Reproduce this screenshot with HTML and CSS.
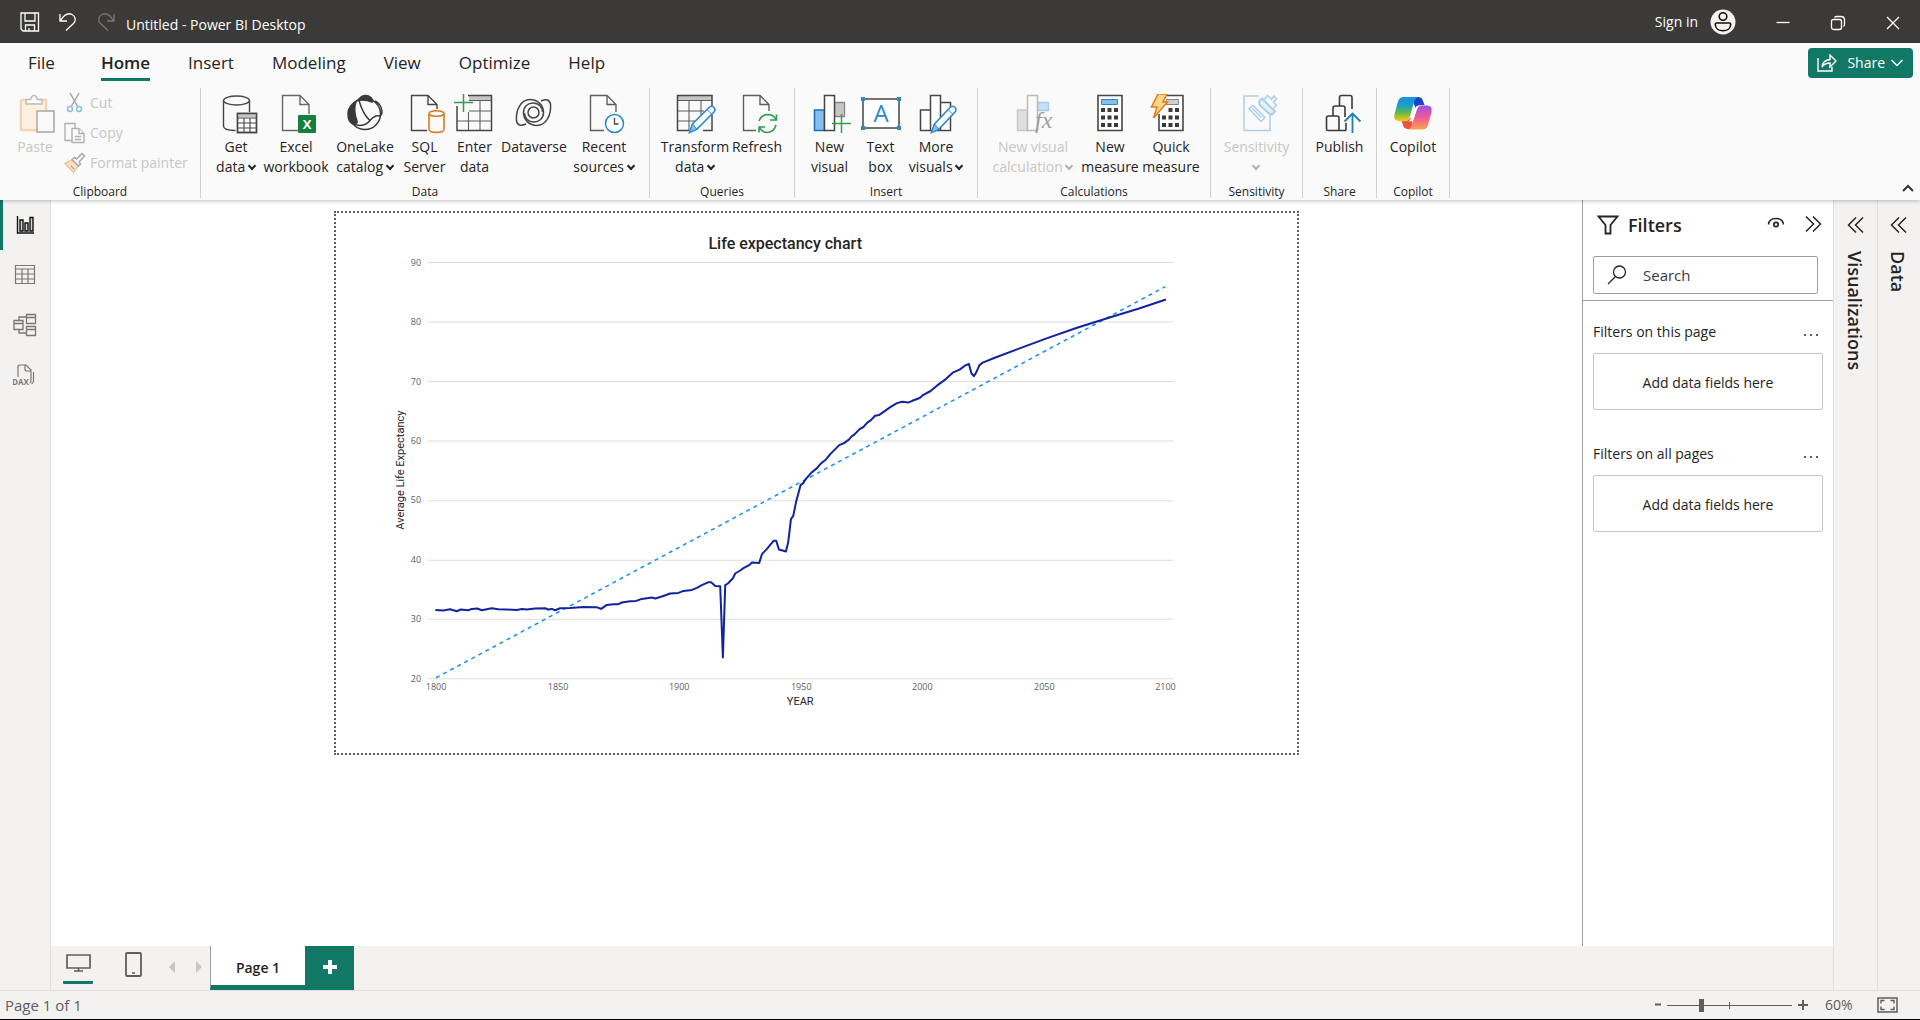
FILE: index.html
```html
<!DOCTYPE html>
<html lang="en">
<head>
<meta charset="utf-8">
<title>Untitled - Power BI Desktop</title>
<link rel="stylesheet" href="styles.css">
</head>
<body>
<header class="titlebar">
  <button class="title-btn" aria-label="Save"><svg width="20" height="20" viewBox="0 0 20 20"><path d="M1 1h17.500v18H3l-2-2zM5 1v8h10V1M5.500 19v-6h9v6M9 19v-3" fill="none" stroke="#fff" stroke-width="1.300"/></svg></button>
  <button class="title-btn" aria-label="Undo"><svg width="20" height="20" viewBox="0 0 20 20"><path d="M2 2v7h7M2.500 8.500C6 3 10 .5 14 2.500c4 2 4 6.500 1.500 9L8 18.500" fill="none" stroke="#fff" stroke-width="1.300"/></svg></button>
  <button class="title-btn" aria-label="Redo" disabled><svg width="20" height="20" viewBox="0 0 20 20"><path d="M18 2v7h-7M17.500 8.500C14 3 10 .5 6 2.500c-4 2-4 6.500-1.500 9L12 18.500" fill="none" stroke="#797775" stroke-width="1.300"/></svg></button>
  <h1 class="title">Untitled - Power BI Desktop</h1>
  <button class="sign-in">Sign in
    <svg width="26" height="26" viewBox="0 0 26 26"><circle cx="13" cy="13" r="12.500" fill="#f3f2f1"/><circle cx="13" cy="7.500" r="3.800" fill="none" stroke="#111" stroke-width="1.600"/><path d="M6.500 14h13q1.200 0 1.200 1.500c0 4-3.500 6.300-7.700 6.300s-7.700-2.300-7.700-6.300Q5.300 14 6.500 14z" fill="none" stroke="#111" stroke-width="1.600"/></svg>
  </button>
  <button class="window-btn" aria-label="Minimize"><svg width="16" height="16" viewBox="0 0 16 16"><path d="M1.500 7.500h13" stroke="#fff" stroke-width="1.300"/></svg></button>
  <button class="window-btn" aria-label="Restore"><svg width="16" height="16" viewBox="0 0 16 16"><g fill="none" stroke="#fff" stroke-width="1.300"><rect x="1.500" y="4.500" width="10" height="10" rx="2"/><path d="M4.500 2.500Q5 1.500 7 1.500h4q3.500 0 3.500 3.500v4q0 2-1 2.500"/></g></svg></button>
  <button class="window-btn" aria-label="Close"><svg width="16" height="16" viewBox="0 0 16 16"><path d="M2 2l12 12M14 2L2 14" stroke="#fff" stroke-width="1.300"/></svg></button>
</header>

<section class="ribbon">
  <nav class="tabs">
    <button class="tab">File</button>
    <button class="tab tab-active">Home</button>
    <button class="tab">Insert</button>
    <button class="tab">Modeling</button>
    <button class="tab">View</button>
    <button class="tab">Optimize</button>
    <button class="tab">Help</button>
    <button class="share"><svg width="20" height="18" viewBox="0 0 20 18"><path d="M1 4v13h14v-4M5 13c.5-5 3.500-7 8-7.500V1l6 6-6 6V9c-4 0-6 1-8 4z" fill="none" stroke="#fff" stroke-width="1.400"/></svg><span>Share</span><svg width="12" height="8" viewBox="0 0 12 8"><path d="M.5 1L6 6.500 11.500 1" fill="none" stroke="#fff" stroke-width="1.400"/></svg></button>
  </nav>
  <div class="groups">
    <section class="group group-clipboard">
      <div class="tools">
        <button class="tool" disabled><svg width="44" height="40" viewBox="0 0 44 40"><path d="M8 6h25v11M8 6v30h17" fill="none" stroke="#f5d3ae" stroke-width="2.500"/><path d="M10 8h21v8h-8v18H10z" fill="#fdf0dc"/><path d="M13 10V5.500h4.500q1-4 3.500-4t3.500 4H29V10z" fill="#fafafa" stroke="#bdbbb9" stroke-width="1.400"/><path d="M24 17h17v21H24z" fill="#fafafa" stroke="#a8a6a4" stroke-width="1.500"/></svg><span>Paste</span></button>
        <div class="small-tools">
          <button class="small-tool" disabled><svg width="22" height="22" viewBox="0 0 22 22"><path d="M6 1l8 14M15 1L7 15" stroke="#a8a6a4" stroke-width="1.500"/><g fill="none" stroke="#8fbdda" stroke-width="1.500"><circle cx="6" cy="17" r="2.500"/><circle cx="15" cy="17" r="2.500"/></g></svg>Cut</button>
          <button class="small-tool" disabled><svg width="22" height="22" viewBox="0 0 22 22"><g fill="#fafafa" stroke="#b3b1af" stroke-width="1.400"><path d="M1 1.500h10v17H1z"/><path d="M8 6.500h7l5 5v9H8z"/><path d="M15 6.500v5h5M11 14.500h6M11 17.500h6"/></g></svg>Copy</button>
          <button class="small-tool" disabled><svg width="22" height="22" viewBox="0 0 22 22"><path d="M1 11.500L8 8l6 6-4.500 6.500z" fill="#fbe3c8" stroke="#f0c294" stroke-width="1.400"/><path d="M8 7.500l6.500 6.500 2-2-1.500-2L20.500 4 18 1.500 12.500 7 10.500 5.500zM7 14l3 3" fill="#fafafa" stroke="#a8a6a4" stroke-width="1.400"/></svg>Format painter</button>
        </div>
      </div>
      <h2 class="group-name">Clipboard</h2>
    </section>

    <section class="group group-data">
      <div class="tools">
        <button class="tool"><svg width="44" height="40" viewBox="0 0 44 40"><g fill="none" stroke="#484644" stroke-width="1.400"><path d="M35.500 18V6.500M9.500 6.500V32c0 3 5.500 4.500 12 4.500"/><ellipse cx="22.500" cy="6.500" rx="13" ry="4.500" fill="#fafafa"/><path d="M23.500 19.500h19v19h-19z" fill="#fff"/><path d="M24 21.500h18" stroke="#c8c6c4" stroke-width="3"/><path d="M23.500 24h19M23.500 29h19M23.500 34h19M30 24v14M36 24v14" stroke-width="1.100"/><path d="M23.500 19.500h19v19h-19z"/></g></svg><span>Get<br>data <i class="caret"></i></span></button>
        <button class="tool"><svg width="44" height="40" viewBox="0 0 44 40"><path d="M24 36.500H8.500v-35H26l9 9V20M26 1.500v9h9" fill="none" stroke="#696765" stroke-width="1.400"/><rect x="24" y="21" width="18" height="18" rx="1" fill="#15803d"/><text x="33" y="35" class="excel-x">X</text></svg><span>Excel<br>workbook</span></button>
        <button class="tool"><svg width="44" height="40" viewBox="0 0 44 40"><g fill="none" stroke="#3b3a39" stroke-width="1.500"><circle cx="22" cy="20" r="15.500" fill="#fafafa"/><path d="M14.500 6.500Q18 2 22 1.500q6 0 8 5.500l-1 1Q22 5 14.500 6.500z" fill="#3b3a39"/><path d="M13 7.500Q5 12 5 20t5 10q5 0 4-3-4-11-1-19.500z" fill="#3b3a39"/><path d="M16 6.500q4 14 11 20M10 30q11 4 17-3.500 5-6 10-4.500 2-1 2-5-1-7-7-10"/></g></svg><span>OneLake<br>catalog <i class="caret"></i></span></button>
        <button class="tool"><svg width="44" height="40" viewBox="0 0 44 40"><path d="M24 36.500H8.500v-35H25l9 9V15M25 1.500v9h9" fill="none" stroke="#484644" stroke-width="1.400"/><path d="M26 20v15c0 4.500 15 4.500 15 0V20" fill="#fafafa" stroke="#dd7a1d" stroke-width="1.600"/><ellipse cx="33.500" cy="19.500" rx="7.500" ry="2.800" fill="#fafafa" stroke="#dd7a1d" stroke-width="1.600"/></svg><span>SQL<br>Server</span></button>
        <button class="tool"><svg width="44" height="40" viewBox="0 0 44 40"><path d="M16 1.500h22.500v5H16z" fill="#c8c6c4"/><g fill="none" stroke="#605e5c" stroke-width="1.100"><path d="M16 6.500h23M16 17h23M4 27h35M15.500 18v18.500M27 7v29.500"/></g><path d="M15 1.500h23.500v35H4V12" fill="none" stroke="#484644" stroke-width="1.500"/><path d="M1 8.500h19M10.500 0v18" stroke="#2e9e4f" stroke-width="1.500"/></svg><span>Enter<br>data</span></button>
        <button class="tool"><svg width="44" height="40" viewBox="0 0 44 40"><g fill="none" stroke="#484644" stroke-width="1.500"><path d="M14 30Q6 33.500 4.500 27C3.500 16 9 5.500 18 5.500c8 0 13.500 6 13.500 13 0 6-4.500 9.500-9.500 9.500-6 0-9.500-4.500-9.500-9"/><path d="M29 7Q37 3.500 38.500 10C39.500 21 34 31.500 25 31.500c-8 0-13.500-6-13.500-13 0-6 4.500-9.500 9.500-9.500 6 0 9.500 4.500 9.500 9"/><circle cx="21.500" cy="18.500" r="5.500"/></g></svg><span>Dataverse</span></button>
        <button class="tool"><svg width="44" height="40" viewBox="0 0 44 40"><path d="M22 36.500H8.500v-35H25l9 9V18M25 1.500v9h9" fill="none" stroke="#605e5c" stroke-width="1.400"/><circle cx="32.500" cy="29.500" r="9" fill="#fff" stroke="#2b88c9" stroke-width="1.500"/><path d="M32.500 24v6h4" fill="none" stroke="#484644" stroke-width="1.300"/></svg><span>Recent<br>sources <i class="caret"></i></span></button>
      </div>
      <h2 class="group-name">Data</h2>
    </section>

    <section class="group group-queries">
      <div class="tools">
        <button class="tool"><svg width="44" height="40" viewBox="0 0 44 40"><path d="M5 1.500h34v5H5z" fill="#c8c6c4"/><g fill="none" stroke="#605e5c" stroke-width="1.100"><path d="M5 6.500h34M5 17h26M5 27h17M16 7v29M28 7v14"/></g><path d="M39 12V1.500H4.500v35H16M30 36.500h9V21" fill="none" stroke="#484644" stroke-width="1.500"/><path d="M16.500 38.500l3-8.500L36 13.500q3-2.500 5 0 2 2 0 4.500L24 35z" fill="#fff" stroke="#2b88c9" stroke-width="1.600"/><path d="M16.500 38.500l3-8.500 4.500 5z" fill="#83beec" stroke="#2b88c9"/><path d="M34 15.500l5 5" stroke="#2b88c9"/></svg><span>Transform<br>data <i class="caret"></i></span></button>
        <button class="tool"><svg width="44" height="40" viewBox="0 0 44 40"><path d="M21 36.500H8.500v-35H25l9 9V17M25 1.500v9h9" fill="none" stroke="#605e5c" stroke-width="1.400"/><g fill="none" stroke="#2e9e4f" stroke-width="1.600"><path d="M24 27q2-6 8.500-6.500 6 0 8.500 5M41.500 20.500V26H35M41 31q-2 7-8.500 7.500-6 0-8.500-6M24 38.500V33h6"/></g></svg><span>Refresh</span></button>
      </div>
      <h2 class="group-name">Queries</h2>
    </section>

    <section class="group group-insert">
      <div class="tools">
        <button class="tool"><svg width="44" height="40" viewBox="0 0 44 40"><path d="M6.500 16h10v20.500h-10z" fill="#83beec" stroke="#1b6fb3" stroke-width="1.500"/><path d="M26.500 8.500h10v14h-10z" fill="#c8c6c4" stroke="#8a8886" stroke-width="1.300"/><path d="M16.500 1.500h10v35h-10z" fill="#fff" stroke="#484644" stroke-width="1.500"/><path d="M24 29.500h19M33.500 20v19" stroke="#2e9e4f" stroke-width="1.500"/></svg><span>New<br>visual</span></button>
        <button class="tool"><svg width="44" height="40" viewBox="0 0 44 40"><path d="M4 5h36v29H4z" fill="#fff" stroke="#484644" stroke-width="1.500"/><path d="M2 3h4v4H2zM38 3h4v4h-4zM2 32h4v4H2zM38 32h4v4h-4z" fill="#2b88c9"/><text x="22" y="28" class="glyph-a">A</text></svg><span>Text<br>box</span></button>
        <button class="tool"><svg width="44" height="40" viewBox="0 0 44 40"><g fill="#fff" stroke="#484644" stroke-width="1.500"><path d="M6.500 16h10v20.500h-10zM26.500 8.500h10v28h-10zM16.500 1.500h10v35h-10z"/></g><path d="M17.500 38.500l3-8.500L36 13.500q3-2.500 5 0 2 2 0 4.500L25 35z" fill="#fff" stroke="#2b88c9" stroke-width="1.600"/><path d="M17.500 38.500l3-8.500 4.500 5z" fill="#83beec" stroke="#2b88c9"/><path d="M34 15.500l5 5" stroke="#2b88c9"/></svg><span>More<br>visuals <i class="caret"></i></span></button>
      </div>
      <h2 class="group-name">Insert</h2>
    </section>

    <section class="group group-calculations">
      <div class="tools">
        <button class="tool" disabled><svg width="44" height="40" viewBox="0 0 44 40"><path d="M6.500 16h10v20.500h-10z" fill="#e1dfdd" stroke="#c8c6c4" stroke-width="1.500"/><path d="M26.500 8.500h11v8h-11z" fill="#c7e0f4" stroke="#a5cdea" stroke-width="1.300"/><path d="M16.500 1.500h10v35h-10z" fill="#fafafa" stroke="#bdbbb9" stroke-width="1.500"/><text x="24" y="34" class="glyph-fx">fx</text></svg><span>New visual<br>calculation <i class="caret"></i></span></button>
        <button class="tool"><svg width="44" height="40" viewBox="0 0 44 40"><path d="M10 1.500h24v35H10z" fill="#fff" stroke="#484644" stroke-width="1.600"/><path d="M13.500 5.500h16v5h-16z" fill="#83beec" stroke="#2b88c9"/><path d="M13 14h4v4h-4zM19.500 14h4v4h-4zM26 14h4v4h-4zM13 21.500h4v4h-4zM19.500 21.500h4v4h-4zM26 21.500h4v4h-4zM13 29h4v4h-4zM19.500 29h4v4h-4zM26 29h4v4h-4z" fill="#3b3a39"/></svg><span>New<br>measure</span></button>
        <button class="tool"><svg width="44" height="40" viewBox="0 0 44 40"><path d="M18 1.500h16v35H10V20" fill="#fff" stroke="#484644" stroke-width="1.600"/><path d="M17.500 5.500h12v5h-13z" fill="#d2d0ce" stroke="#8a8886"/><path d="M19.500 14h4v4h-4zM26 14h4v4h-4zM13 21.500h4v4h-4zM19.500 21.500h4v4h-4zM26 21.500h4v4h-4zM13 29h4v4h-4zM19.500 29h4v4h-4zM26 29h4v4h-4z" fill="#3b3a39"/><path d="M9 0h9l-4 8h4.500L4.500 24 8 13H2.500z" fill="#fbd68b" stroke="#e07d12" stroke-width="1.500"/></svg><span>Quick<br>measure</span></button>
      </div>
      <h2 class="group-name">Calculations</h2>
    </section>

    <section class="group group-sensitivity">
      <div class="tools">
        <button class="tool" disabled><svg width="44" height="40" viewBox="0 0 44 40"><g fill="none" stroke="#abd0e8" stroke-width="1.500"><path d="M24 2H9v34.500h26V20"/><path d="M14 14.500l4-3 12 12-4 4z"/><path d="M17.500 14.500l9 9"/><path d="M24 7.500l3-3 13 13-3 3-3-1-9-8z" fill="#e4f1fa" stroke-width="2"/><path d="M29.500 5.500l3-4 4 4 2.500-3.500 2.500 3-3 3 3 3-3.500 4"/></g></svg><span>Sensitivity<br><i class="caret"></i></span></button>
      </div>
      <h2 class="group-name">Sensitivity</h2>
    </section>

    <section class="group group-share">
      <div class="tools">
        <button class="tool"><svg width="44" height="40" viewBox="0 0 44 40"><g fill="none" stroke="#3b3a39" stroke-width="1.600"><path d="M28 36.500H10q-1.500 0-1.500-1.500V24q0-2 2-2H19q2 0 2 2v12M15 22V14q0-2 2-2h8q2 0 2 2v9M21.500 12V3.500q0-2 2-2H32q2 0 2 2V15M28 29v7.500"/></g><path d="M34.500 39V20M26.500 27.500l8-8 8 8" fill="none" stroke="#1f7fb8" stroke-width="1.800"/></svg><span>Publish</span></button>
      </div>
      <h2 class="group-name">Share</h2>
    </section>

    <section class="group group-copilot">
      <div class="tools">
        <button class="tool"><svg width="44" height="40" viewBox="0 0 44 40">
          <defs>
            <linearGradient id="cp-left" x1="0" y1="0" x2="0" y2="1"><stop offset="0" stop-color="#1b8fe6"/><stop offset=".35" stop-color="#18a0c9"/><stop offset=".65" stop-color="#62b84a"/><stop offset="1" stop-color="#f6c90e"/></linearGradient>
            <linearGradient id="cp-right" x1="0" y1="0" x2="0" y2="1"><stop offset="0" stop-color="#a14fe8"/><stop offset=".5" stop-color="#ef5a92"/><stop offset="1" stop-color="#fda34f"/></linearGradient>
          </defs>
          <path d="M20 3h7q4 0 5 4l1.500 4H30q-4 0-5 4z" fill="#1b43c8"/>
          <path d="M24 35h-7q-4 0-5-4L10.500 27H14q4 0 5-4z" fill="#ee5340"/>
          <path d="M12 3h15q-3 1-4 5l-4 14q-1.500 5-6 5H8q-6 0-4.500-7L7 7.500Q8.500 3 12 3z" fill="url(#cp-left)"/>
          <path d="M32 35.500H17q3-1 4-5l4-14q1.500-5 6-5h5q6 0 4.500 7L37 31q-1.500 4.500-5 4.500z" fill="url(#cp-right)"/>
          <path d="M25 12.500q2-1 4-1-2 1-3 4l-3 9q-1 3-5.500 3 2.500-2 3.500-5z" fill="#fff"/>
        </svg><span>Copilot</span></button>
      </div>
      <h2 class="group-name">Copilot</h2>
    </section>
    <button class="collapse" aria-label="Collapse the ribbon"><svg width="12" height="8" viewBox="0 0 12 8"><path d="M1 7l5-5 5 5" fill="none" stroke="#323130" stroke-width="2"/></svg></button>
  </div>
</section>

<main class="workspace">
  <nav class="rail">
    <button class="rail-btn rail-active" aria-label="Report view"><svg width="24" height="24" viewBox="0 0 24 24"><g fill="#d2d0ce" stroke="#111" stroke-width="1.400"><path d="M3.500 3v17H20" fill="none"/><path d="M6 7h3v11H6zM11 10h3v8h-3zM16 4.500h3V18h-3z"/></g></svg></button>
    <button class="rail-btn" aria-label="Table view"><svg width="24" height="24" viewBox="0 0 24 24"><path d="M2.500 2.500h19v18h-19zM2.500 6h19M2.500 11h19M2.500 16h19M9 6v15M15 6v15" fill="none" stroke="#797775" stroke-width="1.200"/></svg></button>
    <button class="rail-btn" aria-label="Model view"><svg width="24" height="24" viewBox="0 0 24 24"><g fill="none" stroke="#797775" stroke-width="1.300"><path d="M13.500 1.500h9v9h-9zM13.500 4.500h9M13.500 13.500h9v9h-9zM13.500 16.500h9M1 7.500h9v9H1zM1 10.500h9M6 7.500V4h7M6 16.500V20h7"/></g></svg></button>
    <button class="rail-btn" aria-label="DAX query view"><svg width="24" height="24" viewBox="0 0 24 24"><path d="M5 14V4q0-2 2-2h6l5 5v9q0 3-1 4M12 2v4q0 2 2 2h4M20.500 9v9q0 2-2 3" fill="none" stroke="#797775" stroke-width="1.200"/><text x="-1" y="22" class="dax">DAX</text></svg></button>
  </nav>

  <section class="center">
    <div class="editor">
      <div class="canvas">
        <div class="report-page">
          <svg class="chart" viewBox="0 0 960 540" role="img" aria-label="Life expectancy chart">
            <path class="grid" d="M92 49.500H837M92 109H837M92 168.500H837M92 228H837M92 287.500H837M92 347H837M92 406H837M92 465.500H837"/>
            <text class="chart-title" x="449" y="36">Life expectancy chart</text>
            <g class="tick tick-y">
              <text x="85" y="53">90</text><text x="85" y="112">80</text><text x="85" y="172">70</text><text x="85" y="231">60</text>
              <text x="85" y="290">50</text><text x="85" y="350">40</text><text x="85" y="409">30</text><text x="85" y="469">20</text>
            </g>
            <g class="tick tick-x">
              <text x="100" y="477">1800</text><text x="222" y="477">1850</text><text x="343" y="477">1900</text><text x="465" y="477">1950</text>
              <text x="586" y="477">2000</text><text x="708" y="477">2050</text><text x="829" y="477">2100</text>
            </g>
            <text class="axis-name" x="464" y="492">YEAR</text>
            <text class="axis-name" transform="translate(68 257) rotate(-90)">Average Life Expectancy</text>
            <path class="trend" d="M100 464.500L829 73.500"/>
            <polyline class="series" points="99.300,396.700 107.300,397.300 114,396 120.700,398 124.700,396.300 132.300,397 135.700,395.700 141.300,395.300 145.700,397 155.700,395 162.300,396 170.700,396.300 180.700,396.700 185.700,395.700 190.700,396.300 199,395.300 209,395 211.700,396.300 215.700,395.700 219,397 224,395 234,394.700 247.300,393.700 260.700,394 265,395.700 270.700,391.700 277.300,391 282.300,391 285.700,389.300 294,388 300,387.700 305.700,385.700 315.700,384.300 319,385.300 325.700,383.300 334,380.300 342.300,379.700 347.300,377.700 355.700,376.700 360.700,374.700 365.700,372 372.300,369 375,369 379,372.700 384,373 386.700,444.300 389,372 391.700,370.300 396.700,365 399,360.300 404,357.300 407.300,355 413.300,351.700 415.700,349.300 423,349.700 425.700,341 430.700,335.700 437.300,327.700 440,327.700 442.700,336.300 449.700,338.300 452,328.700 454.700,306 457,302.700 460,288 464.300,272 467,270 469.700,265.700 475,259.700 480.700,255 484.700,250.300 489.700,246.300 494,241 503,232 507.300,230.300 512.300,226.700 515.700,223 518.300,221.300 523,216.300 527.300,213.700 530.700,209.700 534.700,207 538.700,202.700 542.700,202 554,194 560.700,190 565.700,188.700 572.300,189.300 576,187.700 583.300,184.900 587.100,181.700 594.300,177.900 600.900,172.300 609.500,166 616.400,159.600 623.300,156.500 628.500,152.600 632.600,150.900 635,160 637.500,163.100 639.900,159.300 643,152.300 646.400,149.500 657.800,144.900 681.900,135.800 709.500,125.600 740.600,114.700 771.600,104.900 802.600,95.400 829.500,86.500"/>
          </svg>
        </div>
      </div>

      <aside class="filters">
        <div class="filters-head">
          <svg width="22" height="20" viewBox="0 0 22 20"><path d="M1.500 1.500h19L13.500 10v8.500h-5V10z" fill="none" stroke="#252423" stroke-width="1.800"/></svg>
          <h2>Filters</h2>
          <button class="icon-btn" aria-label="Hide filter pane in reading view"><svg width="18" height="16" viewBox="0 0 18 16"><path d="M1.500 7.500q.5-6 7.500-6t7.500 6" fill="none" stroke="#252423" stroke-width="1.500"/><circle cx="9" cy="7.500" r="2.200" fill="none" stroke="#252423" stroke-width="1.700"/></svg></button>
          <button class="icon-btn" aria-label="Collapse filters"><svg width="18" height="20" viewBox="0 0 18 20"><path d="M2 1.500L9.500 9 2 16.500M9 1.500L16.500 9 9 16.500" fill="none" stroke="#252423" stroke-width="1.500"/></svg></button>
        </div>
        <div class="search">
          <svg width="20" height="20" viewBox="0 0 20 20"><circle cx="12.500" cy="7" r="6" fill="none" stroke="#252423" stroke-width="1.300"/><path d="M8.500 11.500L1 19" stroke="#252423" stroke-width="1.300"/></svg>
          <input type="search" placeholder="Search" aria-label="Search">
        </div>
        <section class="well">
          <div class="well-head"><h3>Filters on this page</h3><button class="icon-btn" aria-label="More options"><svg width="14" height="4" viewBox="0 0 14 4"><path d="M0 1h2v2H0zM6 1h2v2H6zM12 1h2v2h-2z" fill="#605e5c"/></svg></button></div>
          <div class="drop">Add data fields here</div>
        </section>
        <section class="well">
          <div class="well-head"><h3>Filters on all pages</h3><button class="icon-btn" aria-label="More options"><svg width="14" height="4" viewBox="0 0 14 4"><path d="M0 1h2v2H0zM6 1h2v2H6zM12 1h2v2h-2z" fill="#605e5c"/></svg></button></div>
          <div class="drop">Add data fields here</div>
        </section>
      </aside>
    </div>

    <div class="page-bar">
      <button class="layout-btn layout-active" aria-label="Desktop layout"><svg width="26" height="26" viewBox="0 0 26 26"><path d="M2 4h23v13H2zM13.500 17v3M9 20h9" fill="none" stroke="#605e5c" stroke-width="1.700"/></svg></button>
      <button class="layout-btn" aria-label="Mobile layout"><svg width="26" height="26" viewBox="0 0 26 26"><rect x="5" y="2" width="15" height="23" rx="1" fill="none" stroke="#605e5c" stroke-width="1.800"/><path d="M11 22h3" stroke="#605e5c" stroke-width="1.500"/></svg></button>
      <button class="step" aria-label="Previous page" disabled><svg width="6" height="12" viewBox="0 0 6 12"><path d="M6 0v12L0 6z" fill="#c8c6c4"/></svg></button>
      <button class="step" aria-label="Next page" disabled><svg width="6" height="12" viewBox="0 0 6 12"><path d="M0 0v12l6-6z" fill="#c8c6c4"/></svg></button>
      <button class="page-tab">Page 1</button>
      <button class="add-page" aria-label="New page"><svg width="14" height="14" viewBox="0 0 14 14"><path d="M7 0v14M0 7h14" stroke="#fff" stroke-width="4"/></svg></button>
    </div>
  </section>

  <aside class="side-pane">
    <button class="icon-btn" aria-label="Expand visualizations"><svg width="18" height="18" viewBox="0 0 18 18"><path d="M9 1.500L1.500 9 9 16.500M16 1.500L8.500 9l7.500 7.500" fill="none" stroke="#252423" stroke-width="1.500"/></svg></button>
    <h2>Visualizations</h2>
  </aside>
  <aside class="side-pane">
    <button class="icon-btn" aria-label="Expand data"><svg width="18" height="18" viewBox="0 0 18 18"><path d="M9 1.500L1.500 9 9 16.500M16 1.500L8.500 9l7.500 7.500" fill="none" stroke="#252423" stroke-width="1.500"/></svg></button>
    <h2>Data</h2>
  </aside>
</main>

<footer class="status">
  <span class="page-count">Page 1 of 1</span>
  <button class="zoom-step" aria-label="Zoom out"><svg width="6" height="12" viewBox="0 0 6 12"><path d="M0 5.500h6" stroke="#605e5c" stroke-width="2"/></svg></button>
  <input class="zoom" type="range" min="0" max="100" value="27" aria-label="Zoom">
  <button class="zoom-step" aria-label="Zoom in"><svg width="10" height="12" viewBox="0 0 10 12"><path d="M0 6h10M5 1v10" stroke="#605e5c" stroke-width="2"/></svg></button>
  <span class="zoom-value">60%</span>
  <button class="icon-btn" aria-label="Fit to page"><svg width="21" height="16" viewBox="0 0 21 16"><path d="M1 1h19v14H1z" fill="none" stroke="#605e5c" stroke-width="1.500"/><path d="M4 6.500V3.500h3.500M13.500 3.500H17v3M4 9.500v3h3.500M13.500 12.500H17v-3" fill="none" stroke="#605e5c" stroke-width="1.400"/></svg></button>
</footer>
</body>
</html>
```
FILE: styles.css
```css
* { box-sizing: border-box; }
body {
  margin: 0;
  height: 100vh;
  display: flex;
  flex-direction: column;
  overflow: hidden;
  background: #fff;
  border-bottom: 1px solid #000;
  color: #252423;
  font: 14px/20px "Open Sans", "Noto Sans", sans-serif;
}
button {
  margin: 0;
  padding: 0;
  border: 0;
  background: none;
  color: inherit;
  font: inherit;
}
h1, h2, h3 { margin: 0; font: inherit; }
svg { display: block; flex: none; }

/* Title bar */
.titlebar {
  display: flex;
  align-items: center;
  height: 43px;
  padding: 0 19px 0 20px;
  background: #3b3a39;
  color: #fff;
}
.title-btn { width: 20px; margin-right: 18px; }
.title { margin: 6px auto 0 -8px; white-space: nowrap; }
.sign-in { display: flex; align-items: center; gap: 12px; margin-right: 39px; }
.window-btn { width: 16px; margin-right: 39px; padding-top: 3px; }
.window-btn:last-child { margin-right: 0; }

/* Ribbon */
.ribbon {
  position: relative;
  z-index: 1;
  height: 157px;
  background: #fafafa;
  box-shadow: 0 1px 4px rgba(0, 0, 0, .25);
}
.tabs {
  display: flex;
  align-items: flex-start;
  gap: 38px;
  padding: 5px 7px 0 28px;
  font-size: 17px;
}
.tab { height: 33px; padding-bottom: 3px; color: #252423; }
.tab:first-child { margin-right: 8px; }
.tab-active { padding-bottom: 0; border-bottom: 3px solid #117865; font-weight: 600; }
.share {
  display: flex;
  align-items: center;
  gap: 6px;
  height: 30px;
  margin-left: auto;
  padding: 0 10px 0 9px;
  border-radius: 4px;
  background: #117865;
  color: #fff;
  font-size: 14px;
}
.share span { margin-left: 4px; }
.groups { display: flex; height: 110px; margin-top: 7px; }
.group {
  display: flex;
  flex-direction: column;
  justify-content: space-between;
  padding: 0 8px;
  border-right: 1px solid #d2d0ce;
}
.group-name { line-height: 13px; font-size: 12px; text-align: center; }
.tools { display: grid; }
.group-clipboard { width: 201px; }
.group-clipboard .tools { grid-template-columns: 54px 1fr; }
.group-data .tools { grid-template-columns: 54px 66px 72px 47px 53px 66px 74px; }
.group-queries .tools { grid-template-columns: 74px 50px 4px; }
.group-insert .tools { grid-template-columns: 53px 49px 62px 2px; }
.group-calculations .tools { grid-template-columns: 94px 60px 62px; }
.group-sensitivity .tools { grid-template-columns: 75px; }
.group-share .tools { grid-template-columns: 57px; }
.group-copilot .tools { grid-template-columns: 56px; }
.tool {
  display: flex;
  flex-direction: column;
  align-items: center;
  gap: 3px;
  padding-top: 6px;
  white-space: nowrap;
}
.tool:disabled, .small-tool:disabled { color: #c8c6c4; }
.small-tools { display: flex; flex-direction: column; }
.small-tool { display: flex; align-items: center; gap: 4px; height: 30px; padding-left: 2px; white-space: nowrap; }
.caret {
  display: inline-block;
  width: 6px;
  height: 6px;
  margin: 0 1px 3px 0;
  border: solid currentColor;
  border-width: 0 2px 2px 0;
  transform: rotate(45deg);
}
.tool:disabled .caret { border-color: #b3b1af; }
.collapse { margin: auto 6px 4px auto; padding: 2px 0; }
.excel-x { fill: #fff; font: bold 13px "Open Sans", sans-serif; text-anchor: middle; }
.glyph-a { fill: #2b88c9; font: 24px "Open Sans", sans-serif; text-anchor: middle; }
.glyph-fx { fill: #a19f9d; font: italic 24px "Liberation Serif", serif; }

/* Workspace */
.workspace { flex: 1; display: flex; min-height: 0; background: #f3f2f1; }
.rail { width: 51px; border-right: 1px solid #e1dfdd; }
.rail-btn { display: flex; align-items: center; width: 100%; height: 50px; padding-left: 13px; }
.rail-active { padding-left: 11px; border-left: 3px solid #117865; }
.dax { fill: #797775; font: bold 8px "Open Sans", sans-serif; }
.center { flex: 1; display: flex; flex-direction: column; min-width: 0; }
.editor { flex: 1; display: flex; min-height: 0; background: #fff; }
.canvas { flex: 1; padding-top: 11px; }
.report-page {
  width: 63%;
  margin: 0 auto;
  aspect-ratio: 964 / 544;
  border: 2px dotted #605e5c;
}

/* Chart */
.chart { width: 100%; height: 100%; }
.grid { fill: none; stroke: #dedede; }
.chart-title { fill: #252423; font: 500 16px Roboto, sans-serif; text-anchor: middle; }
.tick { fill: #605e5c; font-size: 9px; }
.tick-y { text-anchor: end; }
.tick-x { text-anchor: middle; }
.axis-name { fill: #252423; font: 11px Roboto, sans-serif; text-anchor: middle; }
.trend { fill: none; stroke: #118dff; stroke-width: 1.5; stroke-dasharray: 4 4; }
.series { fill: none; stroke: #12239e; stroke-width: 2; stroke-linejoin: round; }

/* Filters pane */
.filters { width: 251px; border-left: 1px solid #a19f9d; }
.filters-head { display: flex; align-items: center; height: 50px; padding: 0 11px 0 14px; }
.filters-head h2 { margin: 0 auto 0 9px; font-size: 18px; font-weight: 600; }
.filters-head .icon-btn { margin-left: 19px; }
.search {
  display: flex;
  align-items: center;
  gap: 16px;
  height: 38px;
  margin: 6px 15px 0 10px;
  padding: 0 13px;
  border: 1px solid #a19f9d;
  border-radius: 2px;
}
.search input {
  width: 100%;
  padding: 0;
  border: 0;
  outline: 0;
  background: none;
  color: #252423;
  font: inherit;
  font-size: 15px;
}
.search input::placeholder { color: #3b3a39; }
.well { padding: 21px 10px 13px; }
.search + .well { margin-top: 6px; border-top: 1px solid #a19f9d; }
.well-head { display: flex; align-items: center; justify-content: space-between; padding-right: 5px; }
.well-head .icon-btn { padding-top: 6px; }
.drop {
  height: 57px;
  margin-top: 11px;
  border: 1px solid #c8c6c4;
  border-radius: 2px;
  line-height: 57px;
  text-align: center;
}

/* Collapsed panes */
.side-pane {
  display: flex;
  flex-direction: column;
  align-items: center;
  gap: 17px;
  width: 44px;
  padding: 16px 0 0;
  border-left: 1px solid #e1dfdd;
}
.side-pane:last-child { width: 43px; }
.side-pane h2 { padding-right: 2px; writing-mode: vertical-rl; font-size: 18px; font-weight: 600; }

/* Page tabs */
.page-bar { display: flex; align-items: flex-start; height: 44px; }
.layout-btn { height: 38px; margin-left: 12px; padding: 5px 2px 4px; border-bottom: 3px solid transparent; }
.layout-btn + .layout-btn { margin-left: 24px; padding-left: 4px; }
.layout-active { border-color: #117865; border-radius: 1px; }
.step { height: 42px; margin-left: 21px; }
.layout-btn + .step { margin-left: 20px; }
.page-tab {
  width: 95px;
  height: 44px;
  margin-left: 8px;
  padding-top: 4px;
  border-left: 1px solid #a19f9d;
  border-bottom: 5px solid #117865;
  background: #fff;
  color: #252423;
  font-size: 14px;
  font-weight: 600;
}
.add-page { display: flex; justify-content: center; align-items: center; width: 49px; height: 44px; padding-bottom: 3px; background: #117865; }

/* Status bar */
.status {
  display: flex;
  align-items: center;
  height: 29px;
  padding: 0 22px 0 5px;
  border-top: 1px solid #e1dfdd;
  background: #f3f2f1;
  color: #605e5c;
}
.page-count { margin-right: auto; font-size: 15px; }
.zoom {
  width: 125px;
  height: 14px;
  margin: 0 6px;
  appearance: none;
  background:
    linear-gradient(#605e5c, #605e5c) 50% 50% / 1px 7px no-repeat,
    linear-gradient(#605e5c, #605e5c) 0 50% / 100% 1px no-repeat;
}
.zoom::-webkit-slider-thumb { appearance: none; width: 5px; height: 13px; background: #605e5c; }
.zoom-value { width: 52px; margin-left: 17px; }
```
